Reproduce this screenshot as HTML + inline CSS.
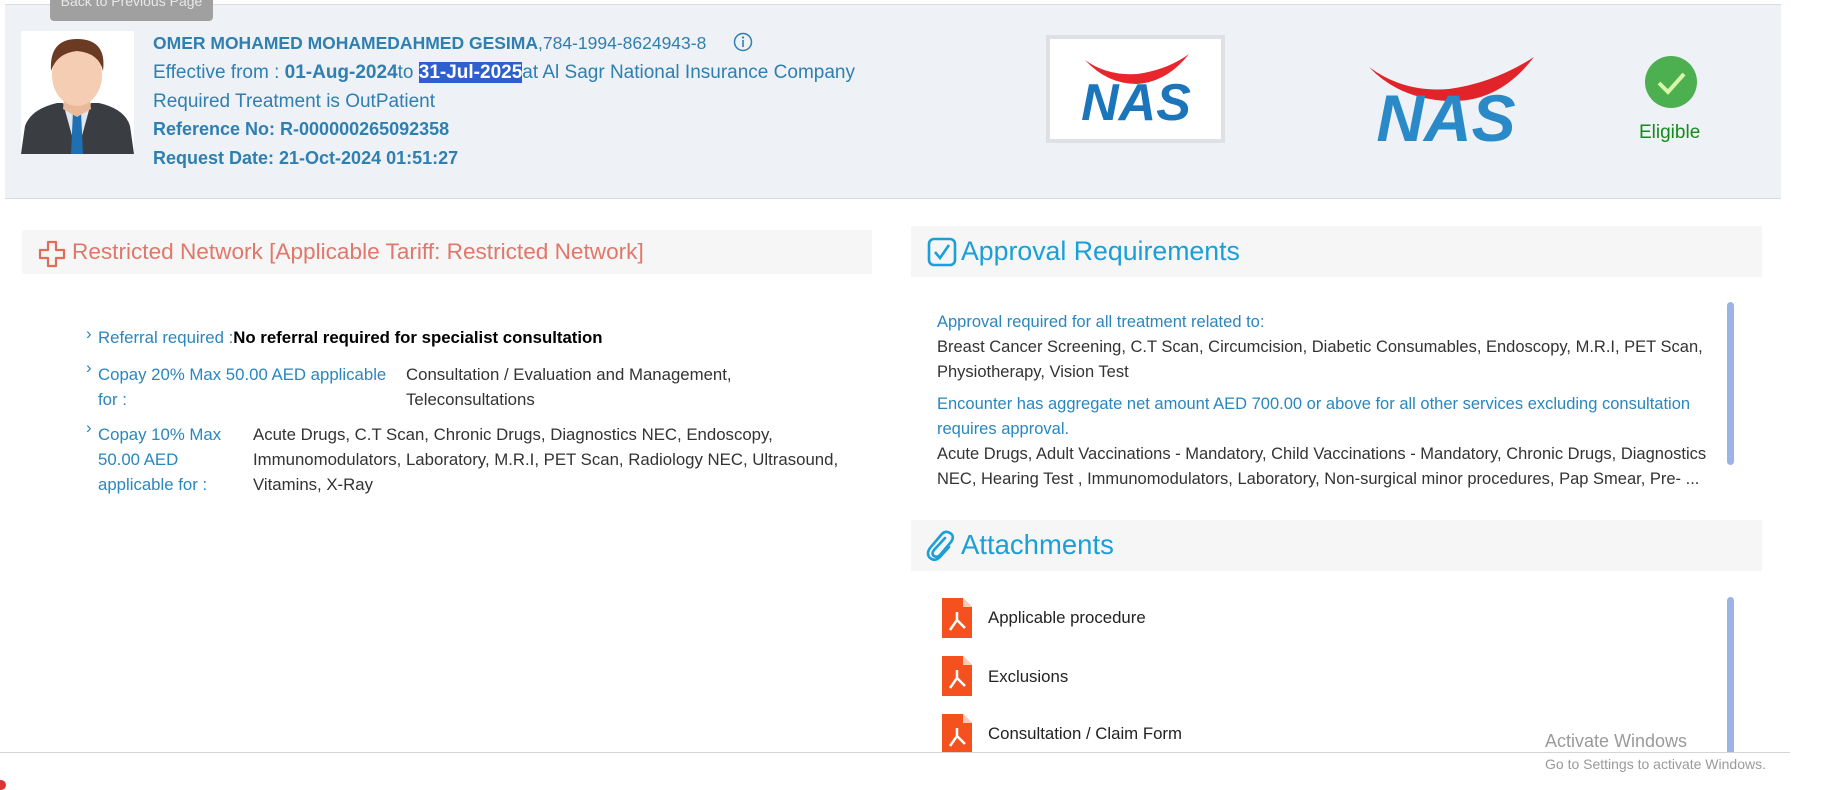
<!DOCTYPE html>
<html><head><meta charset="utf-8"><style>
*{margin:0;padding:0;box-sizing:border-box}
body{width:1826px;height:780px;overflow:hidden;background:#fff;font-family:"Liberation Sans",sans-serif;position:relative}
.abs{position:absolute;white-space:nowrap}
.hdr{position:absolute;left:5px;top:4px;width:1776px;height:195px;background:#eef1f5;border-top:1px solid #d8dde2;border-bottom:1px solid #d6dbe0}
.back{position:absolute;left:50px;top:-8px;width:163px;height:29px;background:#a0a0a0;border-radius:4px;color:#e8e8e8;font-size:14px;text-align:center;line-height:18px}
.info{color:#2f7fb0;font-size:19px}
.ph{position:absolute;background:#f6f6f6}
.rt{color:#333;font-size:16.8px}
.bl{color:#2a86be;font-size:16.8px}
</style></head><body>
<div class="hdr"></div>
<div class="back">Back to Previous Page</div>
<svg class="abs" style="left:21px;top:31px" width="113" height="123" viewBox="0 0 113 123">
<rect width="113" height="123" fill="#fff"/>
<path d="M0 123 L4 95 Q10 78 36 72 L78 72 Q104 78 109 95 L113 123Z" fill="#3a3d42"/>
<path d="M42 72 L56 123 L70 72Z" fill="#dfe6ee"/>
<path d="M52 80 L60 80 L62 123 L50 123Z" fill="#1f6fb5"/>
<path d="M44 58 L68 58 L70 78 L56 86 L42 78Z" fill="#e9b99a"/>
<ellipse cx="56" cy="44" rx="25" ry="31" fill="#f4cdb2"/>
<path d="M30 40 Q28 8 56 8 Q86 8 82 40 Q78 22 56 20 Q36 22 30 40Z" fill="#6b3a22"/>
</svg>
<div class="abs info" style="left:153px;top:33px;font-size:17.5px;font-weight:bold">OMER MOHAMED MOHAMEDAHMED GESIMA<span style="font-weight:normal">,784-1994-8624943-8</span></div>
<svg class="abs" style="left:733px;top:32px" width="20" height="20"><circle cx="10" cy="10" r="8.5" fill="none" stroke="#2f7fb0" stroke-width="1.5"/><rect x="9.2" y="8" width="1.6" height="7" fill="#2f7fb0"/><circle cx="10" cy="5.5" r="1.1" fill="#2f7fb0"/></svg>
<div class="abs info" style="left:153px;top:62px">Effective from : <b>01-Aug-2024</b>to <b style="background:#2f5fcf;color:#fff">31-Jul-2025</b>at Al Sagr National Insurance Company</div>
<div class="abs info" style="left:153px;top:91px">Required Treatment is OutPatient</div>
<div class="abs info" style="left:153px;top:119px;font-weight:bold;font-size:18px">Reference No: R-000000265092358</div>
<div class="abs info" style="left:153px;top:148px;font-weight:bold;font-size:18px">Request Date: 21-Oct-2024 01:51:27</div>

<div class="abs" style="left:1046px;top:35px;width:179px;height:108px;background:#fff;border:4px solid #dde1e6"></div>
<svg class="abs" style="left:1061px;top:52px" width="150" height="76" viewBox="0 0 150 76"><path d="M24 8 Q46 24 76 22 Q106 18 128 2 Q106 30 76 32 Q46 32 24 8Z" fill="#e8262c"/><text x="75" y="68" text-anchor="middle" font-family="Liberation Sans" font-weight="bold" font-style="italic" font-size="52" fill="#1a75bb">NAS</text></svg>
<svg class="abs" style="left:1364px;top:55px" width="175" height="92" viewBox="0 0 175 92"><path d="M5 12 Q40 38 85 34 Q130 28 170 2 Q135 48 85 46 Q35 44 5 12Z" fill="#e0242a"/><text x="82" y="86" text-anchor="middle" font-family="Liberation Sans" font-weight="bold" font-style="italic" font-size="66" fill="#2a8ac8">NAS</text></svg>
<svg class="abs" style="left:1644px;top:55px" width="54" height="54"><circle cx="27" cy="27" r="26" fill="#4caf50"/><path d="M15 28 L24 37 L40 19" fill="none" stroke="#d8f7a8" stroke-width="4"/></svg>
<div class="abs" style="left:1639px;top:122px;color:#178a1e;font-size:19px">Eligible</div>

<div class="ph" style="left:22px;top:230px;width:850px;height:44px"></div>
<svg class="abs" style="left:38px;top:240px" width="28" height="28" viewBox="0 0 28 28"><path d="M10 2h8v8h8v8h-8v8h-8v-8h-8v-8h8z" fill="none" stroke="#e46b5c" stroke-width="2.2" stroke-linejoin="round"/></svg>
<div class="abs" style="left:72px;top:239px;color:#e1776a;font-size:22.6px">Restricted Network [Applicable Tariff: Restricted Network]</div>

<div class="abs bl" style="left:86px;top:324px">›</div>
<div class="abs" style="left:98px;top:328px;font-size:16.8px"><span class="bl">Referral required :</span><b style="color:#000">No referral required for specialist consultation</b></div>
<div class="abs bl" style="left:86px;top:358px">›</div>
<div class="abs bl" style="left:98px;top:362px;line-height:25px">Copay 20% Max 50.00 AED applicable<br>for :</div>
<div class="abs rt" style="left:406px;top:362px;line-height:25px">Consultation / Evaluation and Management,<br>Teleconsultations</div>
<div class="abs bl" style="left:86px;top:418px">›</div>
<div class="abs bl" style="left:98px;top:422px;line-height:25px">Copay 10% Max<br>50.00 AED<br>applicable for :</div>
<div class="abs rt" style="left:253px;top:422px;line-height:25px">Acute Drugs, C.T Scan, Chronic Drugs, Diagnostics NEC, Endoscopy,<br>Immunomodulators, Laboratory, M.R.I, PET Scan, Radiology NEC, Ultrasound,<br>Vitamins, X-Ray</div>

<div class="ph" style="left:911px;top:226px;width:851px;height:51px"></div>
<svg class="abs" style="left:927px;top:237px" width="30" height="30" viewBox="0 0 30 30"><rect x="2" y="2" width="26" height="26" rx="5" fill="none" stroke="#1a9fd8" stroke-width="2.6"/><path d="M8 15 L13 21 L22 8" fill="none" stroke="#1a9fd8" stroke-width="2.6"/></svg>
<div class="abs" style="left:961px;top:236px;color:#1a9fd8;font-size:26.7px">Approval Requirements</div>
<div class="abs" style="left:937px;top:310px;line-height:25px;font-size:16.5px">
<span class="bl" style="font-size:16.5px">Approval required for all treatment related to:</span><br>
<span class="rt" style="font-size:16.5px">Breast Cancer Screening, C.T Scan, Circumcision, Diabetic Consumables, Endoscopy, M.R.I, PET Scan,<br>Physiotherapy, Vision Test</span><br>
<div style="height:7px"></div>
<span class="bl" style="font-size:16.5px">Encounter has aggregate net amount AED 700.00 or above for all other services excluding consultation<br>requires approval.</span><br>
<span class="rt" style="font-size:16.5px">Acute Drugs, Adult Vaccinations - Mandatory, Child Vaccinations - Mandatory, Chronic Drugs, Diagnostics<br>NEC, Hearing Test , Immunomodulators, Laboratory, Non-surgical minor procedures, Pap Smear, Pre- ...</span></div>
<div class="abs" style="left:1727px;top:302px;width:7px;height:163px;background:#9bb3e6;border-radius:4px"></div>

<div class="ph" style="left:911px;top:520px;width:851px;height:51px"></div>
<svg class="abs" style="left:925px;top:530px" width="30" height="32" viewBox="0 0 30 32"><path d="M20 8 L9 20 Q6 24 9 26 Q12 28 15 25 L26 12 Q30 6 25 3 Q20 0 16 5 L5 18 Q1 24 5 28 Q10 32 15 27 L24 17" fill="none" stroke="#1a9fd8" stroke-width="2.6" stroke-linecap="round"/></svg>
<div class="abs" style="left:961px;top:529px;color:#1a9fd8;font-size:27.5px">Attachments</div>

<svg class="abs" style="left:942px;top:598px" width="30" height="40" viewBox="0 0 30 40"><path d="M0 0H21L30 9V40H0Z" fill="#f4511e"/><path d="M21 0V9H30Z" fill="#ffc9b5"/><path d="M15 14 L15 22 L8 32 M15 22 L23 30" stroke="#fff" stroke-width="2.5" fill="none"/></svg>
<div class="abs rt" style="left:988px;top:608px;color:#222">Applicable procedure</div>
<svg class="abs" style="left:942px;top:656px" width="30" height="40" viewBox="0 0 30 40"><path d="M0 0H21L30 9V40H0Z" fill="#f4511e"/><path d="M21 0V9H30Z" fill="#ffc9b5"/><path d="M15 14 L15 22 L8 32 M15 22 L23 30" stroke="#fff" stroke-width="2.5" fill="none"/></svg>
<div class="abs rt" style="left:988px;top:667px;color:#222">Exclusions</div>
<svg class="abs" style="left:942px;top:714px" width="30" height="40" viewBox="0 0 30 40"><path d="M0 0H21L30 9V40H0Z" fill="#f4511e"/><path d="M21 0V9H30Z" fill="#ffc9b5"/><path d="M15 14 L15 22 L8 32 M15 22 L23 30" stroke="#fff" stroke-width="2.5" fill="none"/></svg>
<div class="abs rt" style="left:988px;top:724px;color:#222">Consultation / Claim Form</div>
<div class="abs" style="left:1727px;top:597px;width:7px;height:158px;background:#9bb3e6;border-radius:4px"></div>

<div class="abs" style="left:0;top:752px;width:1790px;height:28px;background:#fff;border-top:1px solid #d4d4d4"></div>
<div class="abs" style="left:-4px;top:780px;width:10px;height:10px;border-radius:5px;background:#d33"></div>
<div class="abs" style="left:1545px;top:731px;color:#9a9a9a;font-size:18px">Activate Windows</div>
<div class="abs" style="left:1545px;top:756px;color:#9a9a9a;font-size:14px">Go to Settings to activate Windows.</div>
</body></html>
